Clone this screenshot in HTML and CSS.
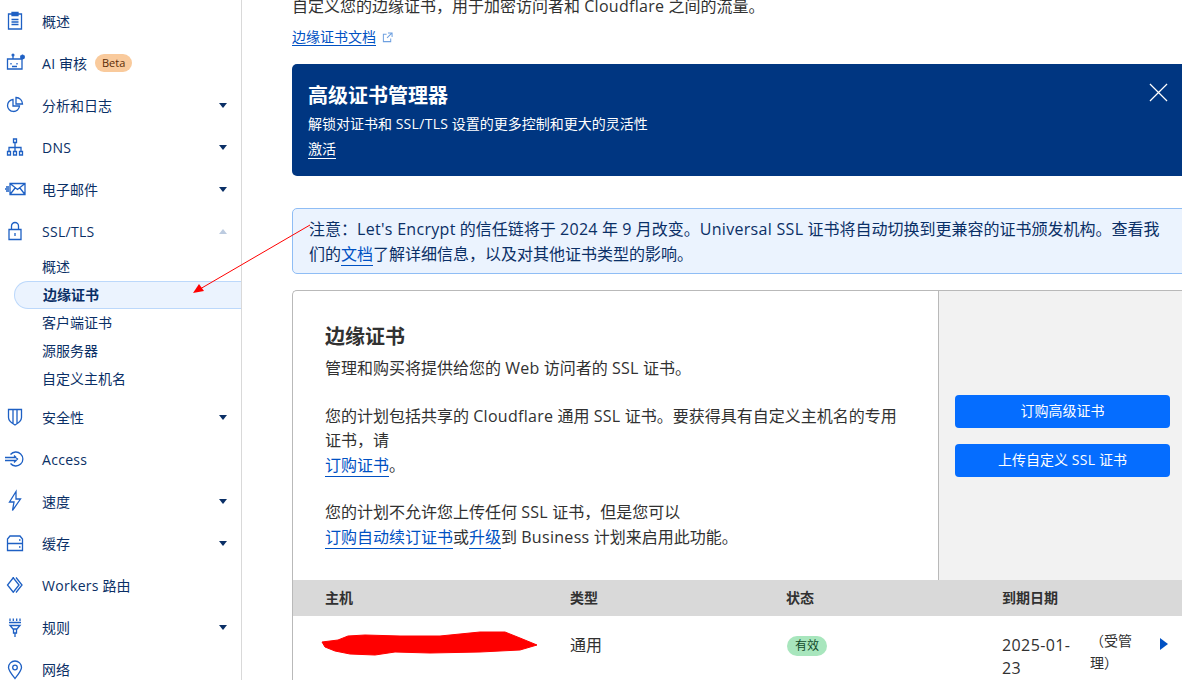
FILE: index.html
```html
<!DOCTYPE html>
<html lang="zh-CN">
<head>
<meta charset="utf-8">
<title>边缘证书</title>
<link rel="stylesheet" href="styles.css">
</head>
<body>
<div class="page">
  <nav class="sidebar">
    <a class="nav-item"><svg class="ico" viewBox="0 0 20 20"><path d="M3.500 3h13v15h-13zM7 1.500h6V4.500H7zM6.500 8.500h7M6.500 11h7M6.500 13.500h7"/></svg><span class="label">概述</span></a>
    <a class="nav-item"><svg class="ico" viewBox="0 0 20 20"><path d="M2.500 6h14.500v10H2.500zM8 6V2.500M6 10v1.500M12 10v1.500M7 13.500h5M17.500 1.500v5M15 4h5M15.700 2.200l3.600 3.600M19.300 2.200l-3.600 3.600"/><circle cx="8" cy="2" r="0.900"/></svg><span class="label"><span class="lat">AI</span> 审核</span><span class="beta">Beta</span></a>
    <a class="nav-item"><svg class="ico" viewBox="0 0 20 20"><path d="M8 4.500a6 6 0 1 0 6.500 6.500H8zM11 2.500a6.500 6.500 0 0 1 6.500 6.500H11z"/></svg><span class="label">分析和日志</span><i class="caret"></i></a>
    <a class="nav-item"><svg class="ico" viewBox="0 0 20 20"><path d="M8.500 2h3v3.500h-3zM10 5.500V14.500M4 14.500v-4h12v4M2.500 14.500h3v3.500h-3zM8.500 14.500h3v3.500h-3zM14.500 14.500h3v3.500h-3z"/></svg><span class="label"><span class="lat">DNS</span></span><i class="caret"></i></a>
    <a class="nav-item"><svg class="ico" viewBox="0 0 20 20"><path d="M5 4.500h15v11H5zM5 4.500l7.500 6 7.500-6M5 15.500l5.500-7M20 15.500l-5.500-7M1 8h3M0 10h4M1 12h3"/></svg><span class="label">电子邮件</span><i class="caret"></i></a>
    <a class="nav-item"><svg class="ico" viewBox="0 0 20 20"><path d="M4 8.500h12V18.500H4zM6.500 8.500V5a3.500 3.500 0 0 1 7 0v3.500M10 12v3"/></svg><span class="label"><span class="lat">SSL/TLS</span></span><i class="caret caret-up"></i></a>
    <div class="subnav">
      <a class="sub-item">概述</a>
      <a class="sub-item sub-active">边缘证书</a>
      <a class="sub-item">客户端证书</a>
      <a class="sub-item">源服务器</a>
      <a class="sub-item">自定义主机名</a>
    </div>
    <a class="nav-item"><svg class="ico" viewBox="0 0 20 20"><path d="M3.500 2.500h13v8c0 3.500-3 5.500-6.500 7.500-3.500-2-6.500-4-6.500-7.500zM8 2.500v14M12 2.500v14"/></svg><span class="label">安全性</span><i class="caret"></i></a>
    <a class="nav-item"><svg class="ico" viewBox="0 0 20 20"><path d="M5.500 5.500A7 7 0 1 1 5.500 14.500M0 8.500h11.500M0 11.500h11.500M9 6.500l3.500 3.500-3.500 3.500"/></svg><span class="label"><span class="lat">Access</span></span></a>
    <a class="nav-item"><svg class="ico" viewBox="0 0 20 20"><path d="M11 .500L4.500 11h4.500L7.500 19.500 15.500 8h-4.500z"/></svg><span class="label">速度</span><i class="caret"></i></a>
    <a class="nav-item"><svg class="ico" viewBox="0 0 20 20"><path d="M2.500 10.500h15v7h-15zM2.500 10.500V6L5 3h10l2.500 3v4.500M14 14h1.500M14 7h1.500"/></svg><span class="label">缓存</span><i class="caret"></i></a>
    <a class="nav-item"><svg class="ico" viewBox="0 0 20 20"><path d="M8.500 2.500L2.500 10l6 7.500M11 2.500l6 7.500-6 7.500M8 2.500l6 7.500-6 7.500"/></svg><span class="label"><span class="lat">Workers</span> 路由</span></a>
    <a class="nav-item"><svg class="ico" viewBox="0 0 20 20"><path d="M4 5.500h12M5 8.500h10L12 12H8zM8.500 12v4h3v-4M10 16v4M5 1.500v2.500M8.300 1.500v2.500M11.700 1.500v2.500M15 1.500v2.500"/></svg><span class="label">规则</span><i class="caret"></i></a>
    <a class="nav-item"><svg class="ico" viewBox="0 0 20 20"><path d="M10 19.500C6 14.500 3.500 11.500 3.500 8.500a6.500 6.500 0 0 1 13 0c0 3-2.500 6-6.500 11z"/><circle cx="10" cy="8.500" r="2.300"/></svg><span class="label">网络</span></a>
  </nav>

  <main class="main">
    <p class="intro">自定义您的边缘证书，用于加密访问者和 <span class="lat">Cloudflare</span> 之间的流量。</p>
    <p class="doc-line"><a class="doc-link">边缘证书文档</a><svg class="ext" viewBox="0 0 12 12"><path d="M5 2.500H1.500v8h8V7M6.500 1h4.500v4.500M11 1L5.500 6.500"/></svg></p>

    <section class="banner">
      <div class="banner-text">
        <h2 class="banner-title">高级证书管理器</h2>
        <p class="banner-desc">解锁对证书和 <span class="lat">SSL/TLS</span> 设置的更多控制和更大的灵活性</p>
        <a class="banner-link">激活</a>
      </div>
      <svg class="close" viewBox="0 0 20 20"><path d="M1 1l18 18M19 1L1 19"/></svg>
    </section>

    <p class="notice">注意：<span class="lat">Let's Encrypt</span> 的信任链将于 <span class="lat">2024</span> 年 <span class="lat">9</span> 月改变。<span class="lat">Universal SSL</span> 证书将自动切换到更兼容的证书颁发机构。查看我们的<a class="link">文档</a>了解详细信息，以及对其他证书类型的影响。</p>

    <section class="card">
      <div class="card-top">
        <div class="card-body">
          <h2 class="card-title">边缘证书</h2>
          <p class="para">管理和购买将提供给您的 <span class="lat">Web</span> 访问者的 <span class="lat">SSL</span> 证书。</p>
          <p class="para">您的计划包括共享的 <span class="lat">Cloudflare</span> 通用 <span class="lat">SSL</span> 证书。要获得具有自定义主机名的专用证书，请<br><a class="link">订购证书</a>。</p>
          <p class="para">您的计划不允许您上传任何 <span class="lat">SSL</span> 证书，但是您可以<br><a class="link">订购自动续订证书</a>或<a class="link">升级</a>到 <span class="lat">Business</span> 计划来启用此功能。</p>
        </div>
        <div class="card-side">
          <button class="btn">订购高级证书</button>
          <button class="btn">上传自定义 <span class="lat">SSL</span> 证书</button>
        </div>
      </div>
      <div class="row row-head">
        <span>主机</span><span>类型</span><span>状态</span><span>到期日期</span>
      </div>
      <div class="row row-data">
        <span></span>
        <span>通用</span>
        <span><b class="status">有效</b></span>
        <span class="date">2025-01-23</span>
        <span class="managed">（受管理）</span>
        <i class="expand"></i>
      </div>
    </section>
  </main>

  <svg class="markup" viewBox="0 0 1182 680" width="1182" height="680">
    <path class="arrow-line" d="M310 225L200 289"/>
    <path class="arrow-head" d="M193 293l6-9 5 7z"/>
    <path class="scribble" d="M322 642L338 640L348 636L365 635L400 636L440 636L480 632L505 632L520 638L537 645L520 650L480 652L430 653L395 652L375 655L350 654L335 651L325 647Z"/>
  </svg>
</div>
</body>
</html>
```
FILE: styles.css
```css
* { box-sizing: border-box; }
html, body { margin: 0; height: 100%; overflow: hidden; background: #fff; }
body { font-family: "Open Sans", "Noto Sans CJK SC", sans-serif; color: #313131; }
p, h2 { margin: 0; }
.lat { letter-spacing: .3px; }

.page { position: relative; display: flex; width: 1182px; height: 680px; overflow: hidden; }

.sidebar {
  flex: 0 0 242px;
  height: 680px;
  border-right: 1px solid #d9d9d9;
  color: #0a2f66;
  font-size: 14px;
}
.nav-item { display: flex; align-items: center; height: 42px; padding-left: 5px; padding-right: 14px; }
.ico { flex: 0 0 20px; width: 20px; height: 20px; overflow: visible; fill: none; stroke: #1e60c4; stroke-width: 1.300; }
.label { margin-left: 17px; }
.beta {
  margin-left: 8px;
  padding: 0 7px;
  height: 18px;
  line-height: 17px;
  border-radius: 9px;
  background: #f9ca9c;
  color: #5a2c06;
  font-size: 11px;
}
.caret {
  margin-left: auto;
  width: 0;
  height: 0;
  border-left: 4.500px solid transparent;
  border-right: 4.500px solid transparent;
  border-top: 5px solid #0a2f66;
}
.caret-up { border-top: 0; border-bottom: 5px solid #bccbe0; }

.subnav { display: flex; flex-direction: column; padding-top: 1px; margin-bottom: 3px; }
.sub-item { height: 28px; line-height: 28px; margin-left: 14px; padding-left: 28px; font-size: 14px; }
.sub-active {
  font-weight: 700;
  background: #ebf3fe;
  border: 1px solid #bcd8fb;
  border-right: 0;
  border-radius: 14px 0 0 14px;
  line-height: 26px;
}

.main { flex: 0 0 900px; min-width: 0; margin-left: 50px; margin-top: -6px; }
.intro { font-size: 16px; line-height: 24px; color: #313131; }
.doc-line { display: flex; align-items: center; margin-top: 7px; height: 24px; font-size: 14px; }
.doc-link { color: #0051c3; border-bottom: 1px solid #0051c3; line-height: 17px; }
.ext { width: 11px; height: 11px; margin-left: 6px; fill: none; stroke: #6ea0e0; stroke-width: 1.100; }

.banner {
  display: flex;
  justify-content: space-between;
  height: 112px;
  margin-top: 15px;
  padding: 18px 14px 0 16px;
  background: #003681;
  color: #fff;
  border-radius: 5px 0 0 5px;
}
.banner-title { font-size: 20px; font-weight: 700; line-height: 27px; }
.banner-desc { font-size: 14px; line-height: 20px; margin-top: 5px; }
.banner-link { display: inline-block; margin-top: 6px; font-size: 14px; line-height: 18px; border-bottom: 1px solid #fff; }
.close { width: 19px; height: 19px; margin-top: 1px; margin-right: 10px; fill: none; stroke: #fff; stroke-width: 1.300; }

.notice {
  margin-top: 32px;
  height: 66px;
  padding: 8px 18px 0 16px;
  font-size: 16px;
  line-height: 24.500px;
  color: #0a2f66;
  background: #ebf3fe;
  border: 1px solid #8fbdf5;
  border-radius: 5px 0 0 5px;
}
.link { color: #0051c3; border-bottom: 1px solid #0051c3; }

.card { margin-top: 16px; border: 1px solid #b9b9b9; border-right: 0; border-radius: 5px 0 0 0; }
.card-top { display: grid; grid-template-columns: 645px 1fr; height: 289px; }
.card-body { padding: 32px 32px 0; font-size: 16px; line-height: 24.400px; }
.card-title { font-size: 20px; font-weight: 700; line-height: 28px; margin-bottom: 5px; }
.para { margin-bottom: 23.400px; }
.card-side {
  display: flex;
  flex-direction: column;
  gap: 16px;
  padding: 104px 16px 0;
  background: #f2f2f2;
  border-left: 1px solid #b9b9b9;
}
.btn {
  width: 215px;
  height: 33px;
  padding: 0 0 3px;
  border: 0;
  border-radius: 4px;
  background: #056dff;
  color: #fff;
  font: inherit;
  font-size: 14px;
}

.row { display: grid; grid-template-columns: 245px 216px 216px 88px 68px 20px; padding-left: 32px; }
.row-head { align-items: center; height: 36px; padding-bottom: 3px; background: #d9d9d9; font-size: 14px; font-weight: 700; }
.row-data { height: 100px; padding-top: 18px; font-size: 16px; line-height: 23px; }
.status {
  display: inline-block;
  height: 20px;
  margin: 2px 0 0 1px;
  padding: 0 8px;
  line-height: 19px;
  border-radius: 10px;
  background: #a8e6bd;
  color: #114a2a;
  font-size: 12px;
  font-weight: 400;
  vertical-align: top;
}
.date { width: 76px; letter-spacing: .4px; }
.managed { width: 60px; margin-top: -4px; font-size: 14px; line-height: 22px; }
.expand {
  width: 0;
  height: 0;
  margin: 4px 0 0 2px;
  border-top: 6.500px solid transparent;
  border-bottom: 6.500px solid transparent;
  border-left: 8px solid #0051c3;
}

.markup { position: absolute; left: 0; top: 0; pointer-events: none; }
.arrow-line { fill: none; stroke: #f00; stroke-width: 1; }
.arrow-head { fill: #f00; }
.scribble { fill: #f00; stroke: #f00; stroke-width: 1; }
```
